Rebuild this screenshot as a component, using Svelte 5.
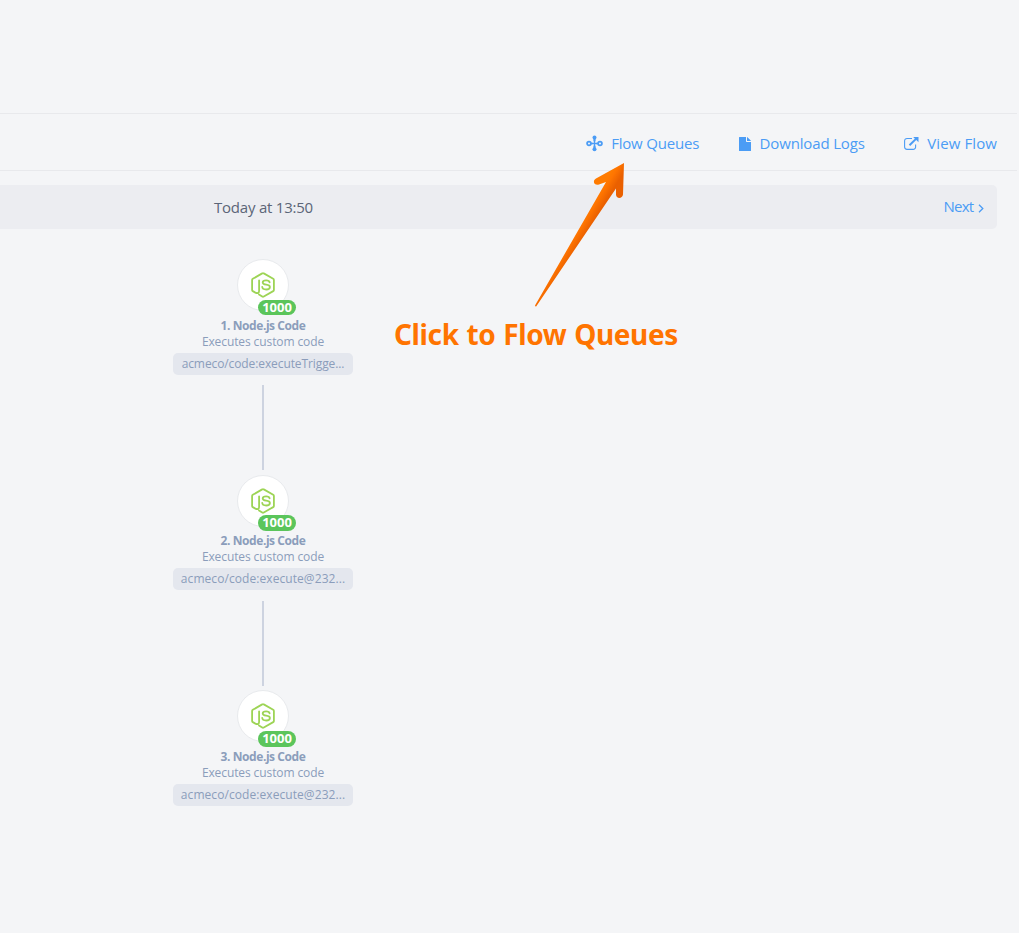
<script>
  const steps = [
    { n: 1, image: 'acmeco/code:executeTrigge...' },
    { n: 2, image: 'acmeco/code:execute@232...' },
    { n: 3, image: 'acmeco/code:execute@232...' }
  ];
</script>

<main>
  <div class="blank"></div>
  <nav>
    <a class="queues">
      <svg width="17" height="17" viewBox="0 0 17 17" fill="none" stroke="currentColor">
        <path d="M5 8.500h7" stroke-width="1.700" />
        <path d="M8.500 3v3.600M8.500 10.400v4" stroke-width="2.200" />
        <path d="M8.500 6v5" stroke-width="1" />
        <circle cx="3" cy="8.500" r="1.900" stroke-width="1.800" />
        <circle cx="14" cy="8.500" r="1.900" stroke-width="1.800" />
        <circle cx="8.500" cy="2.500" r="2" fill="currentColor" stroke="none" />
        <circle cx="8.500" cy="14.300" r="2" fill="currentColor" stroke="none" />
      </svg>
      <span>Flow Queues</span>
    </a>
    <a class="logs">
      <svg width="12" height="14" viewBox="0 0 12 14" fill="currentColor">
        <path d="M.5 0H7v4.300c0 .4.300.7.700.7H12v8.500a.5.500 0 0 1-.5.500H.5a.5.500 0 0 1-.5-.5V.5A.5.500 0 0 1 .5 0zM8 .1c.3.100.5.200.7.400l2.800 2.800c.2.200.3.400.4.700H8z" />
      </svg>
      <span>Download Logs</span>
    </a>
    <a class="view">
      <svg width="15" height="13" viewBox="0 0 15 13" fill="none" stroke="currentColor">
        <path d="M8 1.500H3A2.400 2.400 0 0 0 .6 3.900v6.200A2.400 2.400 0 0 0 3 12.400h6.200a2.400 2.400 0 0 0 2.400-2.400V7.600" stroke-width="1.100" />
        <path d="M5.500 8.200 12 1.900" stroke-width="2" />
        <path d="M9.200 0h5.300v5.200z" fill="currentColor" stroke="none" />
      </svg>
      <span>View Flow</span>
    </a>
  </nav>

  <section class="bar">
    <time>Today at 13:50</time>
    <a class="next"><span>Next</span>
      <svg width="6" height="9" viewBox="0 0 6 9" fill="none" stroke="currentColor" stroke-width="1.300"><path d="m1 .8 3.800 3.700L1 8.200" /></svg>
    </a>
  </section>

  <section class="flow">
    {#each steps as step, i}
      <article>
        <div class="node">
          <svg width="24" height="26" viewBox="0 0 24 26" fill="none" stroke="#9dd455" stroke-linecap="round" stroke-linejoin="round">
            <path d="M8 22.500 11.200 24.500q.8.500 1.600 0l9.400-5.400q.7-.4.700-1.200V8q0-.8-.7-1.200l-9.400-5.400q-.8-.5-1.600 0L1.800 6.800q-.7.400-.7 1.200v9.900q0 .8.700 1.200l2.600 1.500c2.200 1 3.700.2 3.700-1.700V8.300" stroke-width="1.800" />
            <path d="M18.600 10.400c-.2-1.500-1.400-2.100-3.500-2.100-2.200 0-3.400.8-3.400 2.200 0 3.400 7.200.9 7.200 4.500 0 1.700-1.400 2.500-3.700 2.500-2.500 0-3.900-.9-4-2.700" stroke-width="1.800" />
          </svg>
          <b class="badge">1000</b>
        </div>
        <h2>{step.n}. Node.js Code</h2>
        <p>Executes custom code</p>
        <code class:tight={i === 0}>{step.image}</code>
      </article>
      {#if i < steps.length - 1}<div class="link"></div>{/if}
    {/each}
  </section>

  <div class="callout">Click to Flow Queues</div>
  <svg class="arrow" width="92" height="146" viewBox="0 0 92 146">
    <defs>
      <linearGradient id="shade" gradientUnits="userSpaceOnUse" x1="59" y1="36.600" x2="68.400" y2="42.400">
        <stop offset="0" stop-color="#ff7b00" />
        <stop offset=".3" stop-color="#ff7500" />
        <stop offset="1" stop-color="#ea6000" />
      </linearGradient>
    </defs>
    <path d="M89 0 61 15.500c-4.200 2.500-1.500 7.400 3 6L71 19 0 142.500q.5 1.800 1.500.5L81 25.500v6c0 4.500 6.500 4.500 7 0z" fill="url(#shade)" />
  </svg>
</main>

<style>
  :global(body) { background: #f4f5f7; }
  main {
    position: relative;
    height: 933px;
    overflow: hidden;
    font-family: "Open Sans", "Noto Sans", sans-serif;
    color: #4b9cf5;
  }
  .blank { height: 113px; }
  nav {
    box-sizing: border-box;
    width: 1017px;
    height: 58px;
    padding: 2px 20px 0 0;
    border: solid #e8e9ec;
    border-width: 1px 0;
    display: flex;
    justify-content: flex-end;
    align-items: center;
    gap: 39.500px;
    font-size: 15px;
  }
  a { display: flex; align-items: center; white-space: nowrap; }
  nav a { gap: 8px; }
  .queues { letter-spacing: -.2px; }
  .logs { letter-spacing: -.15px; gap: 9px; }
  .view { letter-spacing: .1px; }
  svg { display: block; flex: none; }
  .logs svg { margin-top: 1px; }
  .bar {
    box-sizing: border-box;
    width: 997px;
    height: 44px;
    margin-top: 14px;
    padding-right: 13px;
    border-radius: 0 5px 5px 0;
    background: #ecedf1;
    display: flex;
    align-items: center;
    font-size: 15px;
  }
  time { width: 527px; text-align: center; color: #5b6577; letter-spacing: -.22px; }
  .next { margin-left: auto; gap: 4.500px; letter-spacing: -.7px; padding-bottom: 2px; }
  .next svg { margin-top: 4px; }
  .flow { width: 526px; padding-top: 30.300px; display: flex; flex-direction: column; align-items: center; }
  article { width: 180px; height: 115px; display: flex; flex-direction: column; align-items: center; color: #8b9dbb; }
  article > * { flex: none; }
  .node {
    position: relative;
    box-sizing: border-box;
    width: 52px;
    height: 52px;
    border: 1px solid #e8eaed;
    border-radius: 50%;
    background: #fff;
    display: grid;
    place-items: center;
  }
  .badge {
    position: absolute;
    left: 20px;
    top: 39.600px;
    width: 38px;
    height: 15.500px;
    border-radius: 8px;
    background: #5bc55b;
    color: #fff;
    text-align: center;
    font: 700 13px/15px "Open Sans", sans-serif;
  }
  h2, p { margin: 0; font-size: 12px; line-height: 16px; white-space: nowrap; }
  h2 { margin-top: 6.400px; font-weight: 700; letter-spacing: -.42px; }
  p { letter-spacing: -.1px; }
  code {
    width: 180px;
    height: 22px;
    margin-top: 3px;
    border-radius: 5px;
    background: #e4e7ee;
    font-family: inherit;
    font-size: 12px;
    line-height: 22px;
    letter-spacing: .07px;
    text-align: center;
    white-space: nowrap;
  }
  .tight { letter-spacing: -.1px; }
  .link { width: 2px; height: 85px; margin: 10.800px 0 4.800px; background: #cdd3e0; }
  .callout {
    position: absolute;
    left: 394px;
    top: 314px;
    color: #ff7400;
    font: 700 28px/40px "Noto Sans", sans-serif;
    letter-spacing: -.37px;
    word-spacing: .9px;
    white-space: nowrap;
  }
  .arrow { position: absolute; left: 535px; top: 163px; }
</style>
